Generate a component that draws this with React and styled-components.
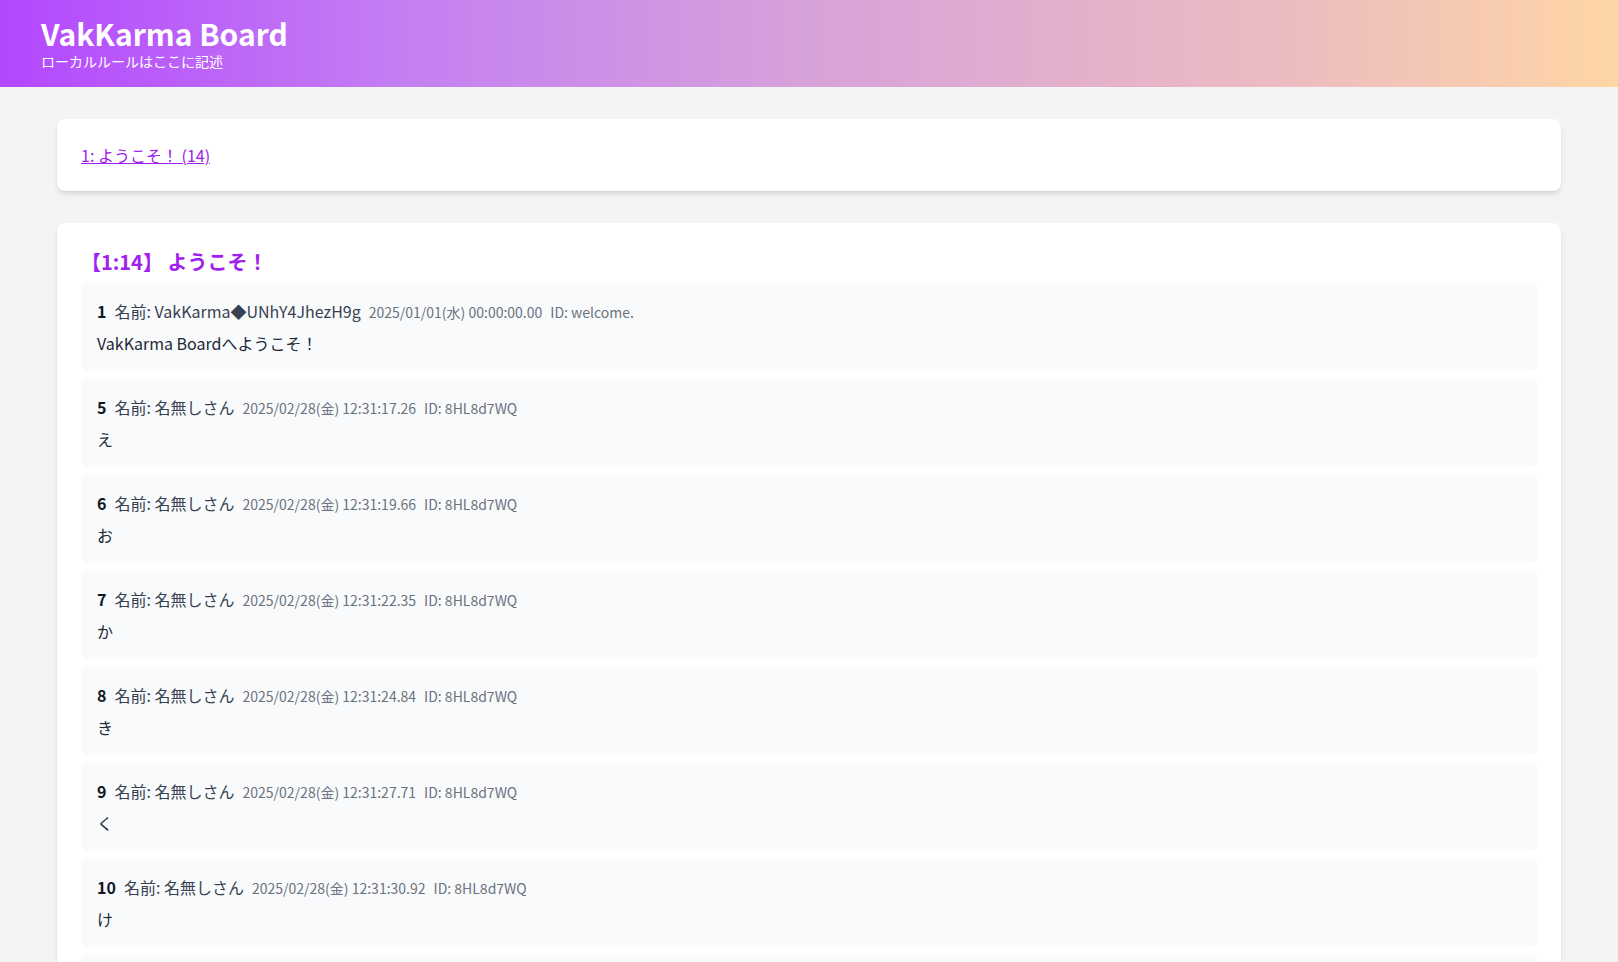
import React from "react";
import styled, { createGlobalStyle } from "styled-components";

const GlobalStyle = createGlobalStyle`
  html { scrollbar-width: none; }
  html::-webkit-scrollbar, body::-webkit-scrollbar { display: none; }
  body {
    margin: 0;
    background: #f3f4f6;
    font-family: "Noto Sans CJK JP", "Noto Sans", sans-serif;
    color: #1f2937;
  }
  * { box-sizing: border-box; }
`;

const Header = styled.header`
  background: linear-gradient(
    to right,
    #b347ff 0%,
    #c47ff2 25%,
    #d8a2da 50%,
    #edbcc0 80%,
    #ffd6a5 100%
  );
  padding: 15px 41px 16px;
  color: #ffffff;
`;

const SiteTitle = styled.h1`
  margin: 0;
  font-size: 30px;
  line-height: 36px;
  font-weight: 700;
`;

const SubTitle = styled.p`
  margin: 0;
  font-size: 14px;
  line-height: 20px;
`;

const Main = styled.main`
  padding: 32px 57px;
  display: flex;
  flex-direction: column;
  gap: 32px;
`;

const Card = styled.section`
  background: #ffffff;
  border-radius: 8px;
  box-shadow: 0 4px 6px -1px rgba(0, 0, 0, 0.1), 0 2px 4px -2px rgba(0, 0, 0, 0.1);
  padding: 24px;
`;

const ThreadLink = styled.a`
  color: #a020f0;
  text-decoration: underline;
  font-size: 16px;
  line-height: 24px;
  display: inline-block;
`;

const ThreadTitle = styled.h2`
  margin: 1px 0 7px;
  color: #a020f0;
  font-size: 20px;
  line-height: 28px;
  font-weight: 700;
`;

const PostList = styled.div`
  display: flex;
  flex-direction: column;
  gap: 8px;
`;

const Post = styled.article`
  background: #f9fafb;
  border-radius: 6px;
  padding: 16px;
`;

const PostHead = styled.div`
  display: flex;
  align-items: baseline;
  gap: 8px;
  height: 24px;
  line-height: 24px;
  margin-bottom: 8px;
`;

const Num = styled.span`
  font-weight: 700;
  font-size: 16px;
  color: #111827;
`;

const Name = styled.span`
  font-size: 16px;
  color: #374151;
`;

const Meta = styled.span`
  font-size: 14px;
  line-height: 20px;
  color: #6b7280;
`;

const Body = styled.div`
  font-size: 16px;
  line-height: 24px;
  color: #1f2937;
`;

const posts = [
  { n: 1, name: "VakKarma◆UNhY4JhezH9g", date: "2025/01/01(水) 00:00:00.00", id: "welcome.", body: "VakKarma Boardへようこそ！" },
  { n: 5, name: "名無しさん", date: "2025/02/28(金) 12:31:17.26", id: "8HL8d7WQ", body: "え" },
  { n: 6, name: "名無しさん", date: "2025/02/28(金) 12:31:19.66", id: "8HL8d7WQ", body: "お" },
  { n: 7, name: "名無しさん", date: "2025/02/28(金) 12:31:22.35", id: "8HL8d7WQ", body: "か" },
  { n: 8, name: "名無しさん", date: "2025/02/28(金) 12:31:24.84", id: "8HL8d7WQ", body: "き" },
  { n: 9, name: "名無しさん", date: "2025/02/28(金) 12:31:27.71", id: "8HL8d7WQ", body: "く" },
  { n: 10, name: "名無しさん", date: "2025/02/28(金) 12:31:30.92", id: "8HL8d7WQ", body: "け" },
  { n: 11, name: "名無しさん", date: "2025/02/28(金) 12:31:33.48", id: "8HL8d7WQ", body: "こ" },
  { n: 12, name: "名無しさん", date: "2025/02/28(金) 12:31:36.02", id: "8HL8d7WQ", body: "さ" },
];

export default function App() {
  return (
    <>
      <GlobalStyle />
      <Header>
        <SiteTitle>VakKarma Board</SiteTitle>
        <SubTitle>ローカルルールはここに記述</SubTitle>
      </Header>
      <Main>
        <Card>
          <ThreadLink href="#">1: ようこそ！ (14)</ThreadLink>
        </Card>
        <Card>
          <ThreadTitle>【1:14】 ようこそ！</ThreadTitle>
          <PostList>
            {posts.map((p) => (
              <Post key={p.n}>
                <PostHead>
                  <Num>{p.n}</Num>
                  <Name>名前: {p.name}</Name>
                  <Meta>{p.date}</Meta>
                  <Meta>ID: {p.id}</Meta>
                </PostHead>
                <Body>{p.body}</Body>
              </Post>
            ))}
          </PostList>
        </Card>
      </Main>
    </>
  );
}
